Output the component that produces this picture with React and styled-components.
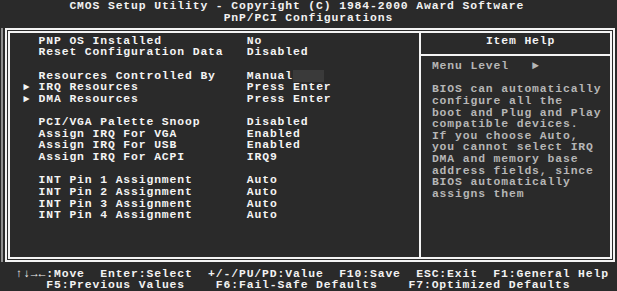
import styled, { createGlobalStyle } from 'styled-components';

// text-mode grid: 80 x 25 cells
const CW = 617 / 80
const RH = 291 / 25
const FS = 11.4

const GlobalStyle = createGlobalStyle`
  html, body {
    margin: 0;
    padding: 0;
    background: #2a2a2a;
  }
`

const Screen = styled.div`
  width: 617px;
  height: 291px;
  overflow: hidden;
  display: flex;
  flex-direction: column;
  background: #2a2a2a;
  color: #f2f2f2;
  font-family: "Liberation Mono", "DejaVu Sans Mono", monospace;
  font-weight: bold;
  font-size: ${FS}px;
  letter-spacing: ${CW - FS * 0.6}px;
  font-kerning: none;
`

const TextRow = styled.div`
  height: ${RH}px;
  box-sizing: border-box;
  padding-top: 1px;
  padding-left: ${p => p.$col * CW - (p.$origin || 0)}px;
  line-height: ${RH - 1}px;
  white-space: pre;
  color: ${p => p.$dim ? '#b6b6b6' : '#f2f2f2'};
`

const Header = styled.header`
  display: flex;
  flex-direction: column;
  color: #e6e6e6;
`

const FrameRow = styled.div`
  display: flex;
  height: 234px;
  margin-top: 4.7px;
  padding-left: 1px;
`

const EdgeStrip = styled.div`
  width: 2px;
  background: #8f8f8f;
  margin-right: 2px;
`

const OuterFrame = styled.div`
  width: 610px;
  box-sizing: border-box;
  border: 2px solid #f4f4f4;
  padding: 1px;
  display: flex;
`

const InnerFrame = styled.div`
  flex: 1;
  border: 2px solid #f4f4f4;
  display: flex;
`

const MainPanel = styled.section`
  width: 409px;
  padding-top: ${3 * RH - 33}px;
  padding-left: ${3 * CW - 10}px;
  box-sizing: border-box;
`

const SettingsGrid = styled.div`
  display: grid;
  grid-template-columns: ${2 * CW}px ${27 * CW}px 1fr;
  grid-auto-rows: ${RH}px;
`

const Cell = styled.div`
  box-sizing: border-box;
  padding-top: 1px;
  line-height: ${RH - 1}px;
  white-space: pre;
  color: #f4f4f4;
`

const Marker = styled(Cell)`
  font-size: ${FS - 1}px;
`

const Spacer = styled.div`
  grid-column: 1 / -1;
`

const Highlight = styled.span`
  background: #3a3a3a;
`

const HelpPanel = styled.aside`
  flex: 1;
  border-left: 2px solid #f4f4f4;
  display: flex;
  flex-direction: column;
`

const HelpHeader = styled.div`
  height: 19px;
  padding-top: ${3 * RH - 33}px;
  box-sizing: content-box;
  border-bottom: 2px solid #f4f4f4;
`

const HelpBody = styled.div`
  padding-top: ${5 * RH - 54}px;
`

const Footer = styled.footer`
  margin-top: auto;
  display: flex;
  flex-direction: column;
  color: #f6f6f6;
`

const HELP_X = 421

const settings = [
  { name: 'PNP OS Installed', value: 'No' },
  { name: 'Reset Configuration Data', value: 'Disabled' },
  null,
  { name: 'Resources Controlled By', value: 'Manual', field: true },
  { name: 'IRQ Resources', value: 'Press Enter', sub: true },
  { name: 'DMA Resources', value: 'Press Enter', sub: true },
  null,
  { name: 'PCI/VGA Palette Snoop', value: 'Disabled' },
  { name: 'Assign IRQ For VGA', value: 'Enabled' },
  { name: 'Assign IRQ For USB', value: 'Enabled' },
  { name: 'Assign IRQ For ACPI', value: 'IRQ9' },
  null,
  { name: 'INT Pin 1 Assignment', value: 'Auto' },
  { name: 'INT Pin 2 Assignment', value: 'Auto' },
  { name: 'INT Pin 3 Assignment', value: 'Auto' },
  { name: 'INT Pin 4 Assignment', value: 'Auto' },
]

const helpLines = [
  'BIOS can automatically',
  'configure all the',
  'boot and Plug and Play',
  'compatible devices.',
  'If you choose Auto,',
  'you cannot select IRQ',
  'DMA and memory base',
  'address fields, since',
  'BIOS automatically',
  'assigns them',
]

function Settings() {
  return (
    <SettingsGrid>
      {settings.map((item, index) => item === null ? (
        <Spacer key={index} />
      ) : (
        [
          <Marker key={index + 'm'}>{item.sub ? '►' : ''}</Marker>,
          <Cell key={index + 'n'}>{item.name}</Cell>,
          <Cell key={index + 'v'}>
            {item.value}
            {item.field && <Highlight>{'    '}</Highlight>}
          </Cell>,
        ]
      ))}
    </SettingsGrid>
  )
}

function Help() {
  return (
    <HelpPanel>
      <HelpHeader>
        <TextRow $col={63} $origin={HELP_X}>Item Help</TextRow>
      </HelpHeader>
      <HelpBody>
        <TextRow $col={56} $origin={HELP_X} $dim>{'Menu Level   ►'}</TextRow>
        <TextRow $col={0} />
        {helpLines.map((line, index) => (
          <TextRow key={index} $col={56} $origin={HELP_X} $dim>{line}</TextRow>
        ))}
      </HelpBody>
    </HelpPanel>
  )
}

export default function App() {
  return (
    <>
      <GlobalStyle />
      <Screen>
        <Header>
          <TextRow $col={9}>CMOS Setup Utility - Copyright (C) 1984-2000 Award Software</TextRow>
          <TextRow $col={29}>PnP/PCI Configurations</TextRow>
        </Header>

        <FrameRow>
          <EdgeStrip />
          <OuterFrame>
            <InnerFrame>
              <MainPanel>
                <Settings />
              </MainPanel>
              <Help />
            </InnerFrame>
          </OuterFrame>
        </FrameRow>

        <Footer>
          <TextRow $col={2}>{'↑↓→←:Move  Enter:Select  +/-/PU/PD:Value  F10:Save  ESC:Exit  F1:General Help'}</TextRow>
          <TextRow $col={6}>{'F5:Previous Values    F6:Fail-Safe Defaults    F7:Optimized Defaults'}</TextRow>
        </Footer>
      </Screen>
    </>
  )
}
